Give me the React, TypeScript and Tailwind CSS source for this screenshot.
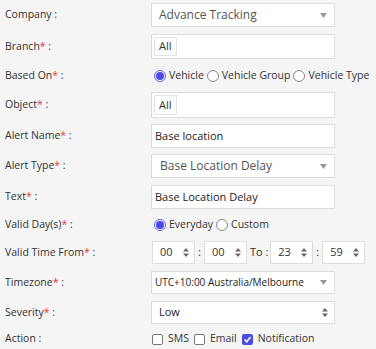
import React from "react";

const font = { fontFamily: '"Open Sans", "Noto Sans", sans-serif' };

function Label({ text, req }: { text: string; req?: boolean }) {
  return (
    <div className="w-[151px] shrink-0 pl-[5px] text-[10.5px] text-[#333]">
      {text}
      {req && <span className="text-[#e53935]">*</span>}
      <span> :</span>
    </div>
  );
}

function Caret() {
  return (
    <svg width="7" height="5" viewBox="0 0 7 5" className="shrink-0">
      <path d="M0 0 H7 L3.5 5 Z" fill="#999" />
    </svg>
  );
}

function UpDown() {
  return (
    <svg width="6" height="9" viewBox="0 0 6 9" className="shrink-0">
      <path d="M0 3.5 L3 0 L6 3.5 Z" fill="#666" />
      <path d="M0 5.5 L3 9 L6 5.5 Z" fill="#666" />
    </svg>
  );
}

function Radio({ on, label }: { on?: boolean; label: string }) {
  return (
    <span className="flex items-center gap-[3px] whitespace-nowrap">
      {on ? (
        <span className="flex h-[12px] w-[12px] items-center justify-center rounded-full border border-[#5a5ae6] bg-white">
          <span className="h-[8px] w-[8px] rounded-full bg-[#4a4ae0]" />
        </span>
      ) : (
        <span className="h-[12px] w-[12px] rounded-full border border-[#888] bg-white" />
      )}
      <span>{label}</span>
    </span>
  );
}

function Check({ on, label }: { on?: boolean; label: string }) {
  return (
    <span className="flex items-center gap-[5px] whitespace-nowrap">
      {on ? (
        <span className="flex h-[11px] w-[11px] items-center justify-center rounded-[2px] bg-[#4b4be0]">
          <svg width="9" height="9" viewBox="0 0 9 9">
            <path d="M1.5 4.5 L3.7 6.7 L7.5 2" stroke="#fff" strokeWidth="1.6" fill="none" />
          </svg>
        </span>
      ) : (
        <span className="h-[11px] w-[11px] rounded-[2px] border border-[#777] bg-white" />
      )}
      <span>{label}</span>
    </span>
  );
}

function Box({ children, h = "h-[24px]" }: { children?: React.ReactNode; h?: string }) {
  return (
    <div className={`flex w-[184px] items-center border border-[#ddd] bg-white ${h}`}>{children}</div>
  );
}

function TimeSel({ value }: { value: string }) {
  return (
    <div className="flex h-[23px] w-[43px] items-center justify-between border border-[#ddd] bg-white pl-[7px] pr-[5px] text-[11px] text-[#333]">
      <span>{value}</span>
      <UpDown />
    </div>
  );
}

export default function App() {
  return (
    <div className="h-[349px] w-[376px] overflow-hidden whitespace-nowrap bg-[#f5f5f5] pt-[3px]" style={font}>
      {/* Company */}
      <div className="flex h-[24px] items-center">
        <Label text="Company" />
        <Box>
          <span className="flex-1 pl-[7px] text-[12px] text-[#555]">Advance Tracking</span>
          <span className="pr-[7px]"><Caret /></span>
        </Box>
      </div>

      {/* Branch */}
      <div className="mt-[7px] flex h-[25px] items-center">
        <Label text="Branch" req />
        <Box h="h-[25px]">
          <span className="ml-[2px] flex h-[19px] items-center border border-[#e2e2e2] px-[4px] text-[11px] text-[#333]">All</span>
        </Box>
      </div>

      {/* Based On */}
      <div className="mt-[5px] flex h-[24px] items-center">
        <Label text="Based On" req />
        <div className="flex items-center gap-[3px] pl-[3px] text-[10.5px] text-[#333]">
          <Radio on label="Vehicle" />
          <Radio label="Vehicle Group" />
          <Radio label="Vehicle Type" />
        </div>
      </div>

      {/* Object */}
      <div className="mt-[4px] flex h-[26px] items-center">
        <Label text="Object" req />
        <Box h="h-[26px]">
          <span className="ml-[2px] flex h-[20px] items-center border border-[#e2e2e2] px-[4px] text-[11px] text-[#333]">All</span>
        </Box>
      </div>

      {/* Alert Name */}
      <div className="mt-[6px] flex h-[24px] items-center">
        <Label text="Alert Name" req />
        <Box>
          <span className="pl-[3px] text-[11px] text-[#222]">Base location</span>
        </Box>
      </div>

      {/* Alert Type */}
      <div className="mt-[6px] flex h-[24px] items-center">
        <Label text="Alert Type" req />
        <Box>
          <span className="flex-1 pl-[8px] text-[12px] text-[#555]">Base Location Delay</span>
          <span className="pr-[7px]"><Caret /></span>
        </Box>
      </div>

      {/* Text */}
      <div className="mt-[7px] flex h-[24px] items-center">
        <Label text="Text" req />
        <Box>
          <span className="pl-[3px] text-[11px] text-[#222]">Base Location Delay</span>
        </Box>
      </div>

      {/* Valid Days */}
      <div className="mt-[4px] flex h-[24px] items-center">
        <Label text="Valid Day(s)" req />
        <div className="flex items-center gap-[3px] pl-[3px] text-[10.5px] text-[#333]">
          <Radio on label="Everyday" />
          <Radio label="Custom" />
        </div>
      </div>

      {/* Valid Time */}
      <div className="mt-[4px] flex h-[23px] items-center">
        <Label text="Valid Time From" req />
        <div className="flex items-center pl-[1px] text-[11px] text-[#333]">
          <TimeSel value="00" />
          <span className="px-[3px]">:</span>
          <TimeSel value="00" />
          <span className="pl-[3px] pr-[2px]">To :</span>
          <TimeSel value="23" />
          <span className="px-[3px]">:</span>
          <TimeSel value="59" />
        </div>
      </div>

      {/* Timezone */}
      <div className="mt-[7px] flex h-[23px] items-center">
        <Label text="Timezone" req />
        <Box h="h-[23px]">
          <span className="flex-1 pl-[3px] text-[10px] text-[#222]">UTC+10:00 Australia/Melbourne</span>
          <span className="pr-[7px]"><Caret /></span>
        </Box>
      </div>

      {/* Severity */}
      <div className="mt-[7px] flex h-[23px] items-center">
        <Label text="Severity" req />
        <Box h="h-[23px]">
          <span className="flex-1 pl-[7px] text-[11px] text-[#222]">Low</span>
          <span className="pr-[6px]"><UpDown /></span>
        </Box>
      </div>

      {/* Action */}
      <div className="mt-[3px] flex h-[24px] items-center">
        <Label text="Action" />
        <div className="flex items-center gap-[5px] pl-[1px] text-[10.5px] text-[#333]">
          <Check label="SMS" />
          <Check label="Email" />
          <Check on label="Notification" />
        </div>
      </div>
    </div>
  );
}
